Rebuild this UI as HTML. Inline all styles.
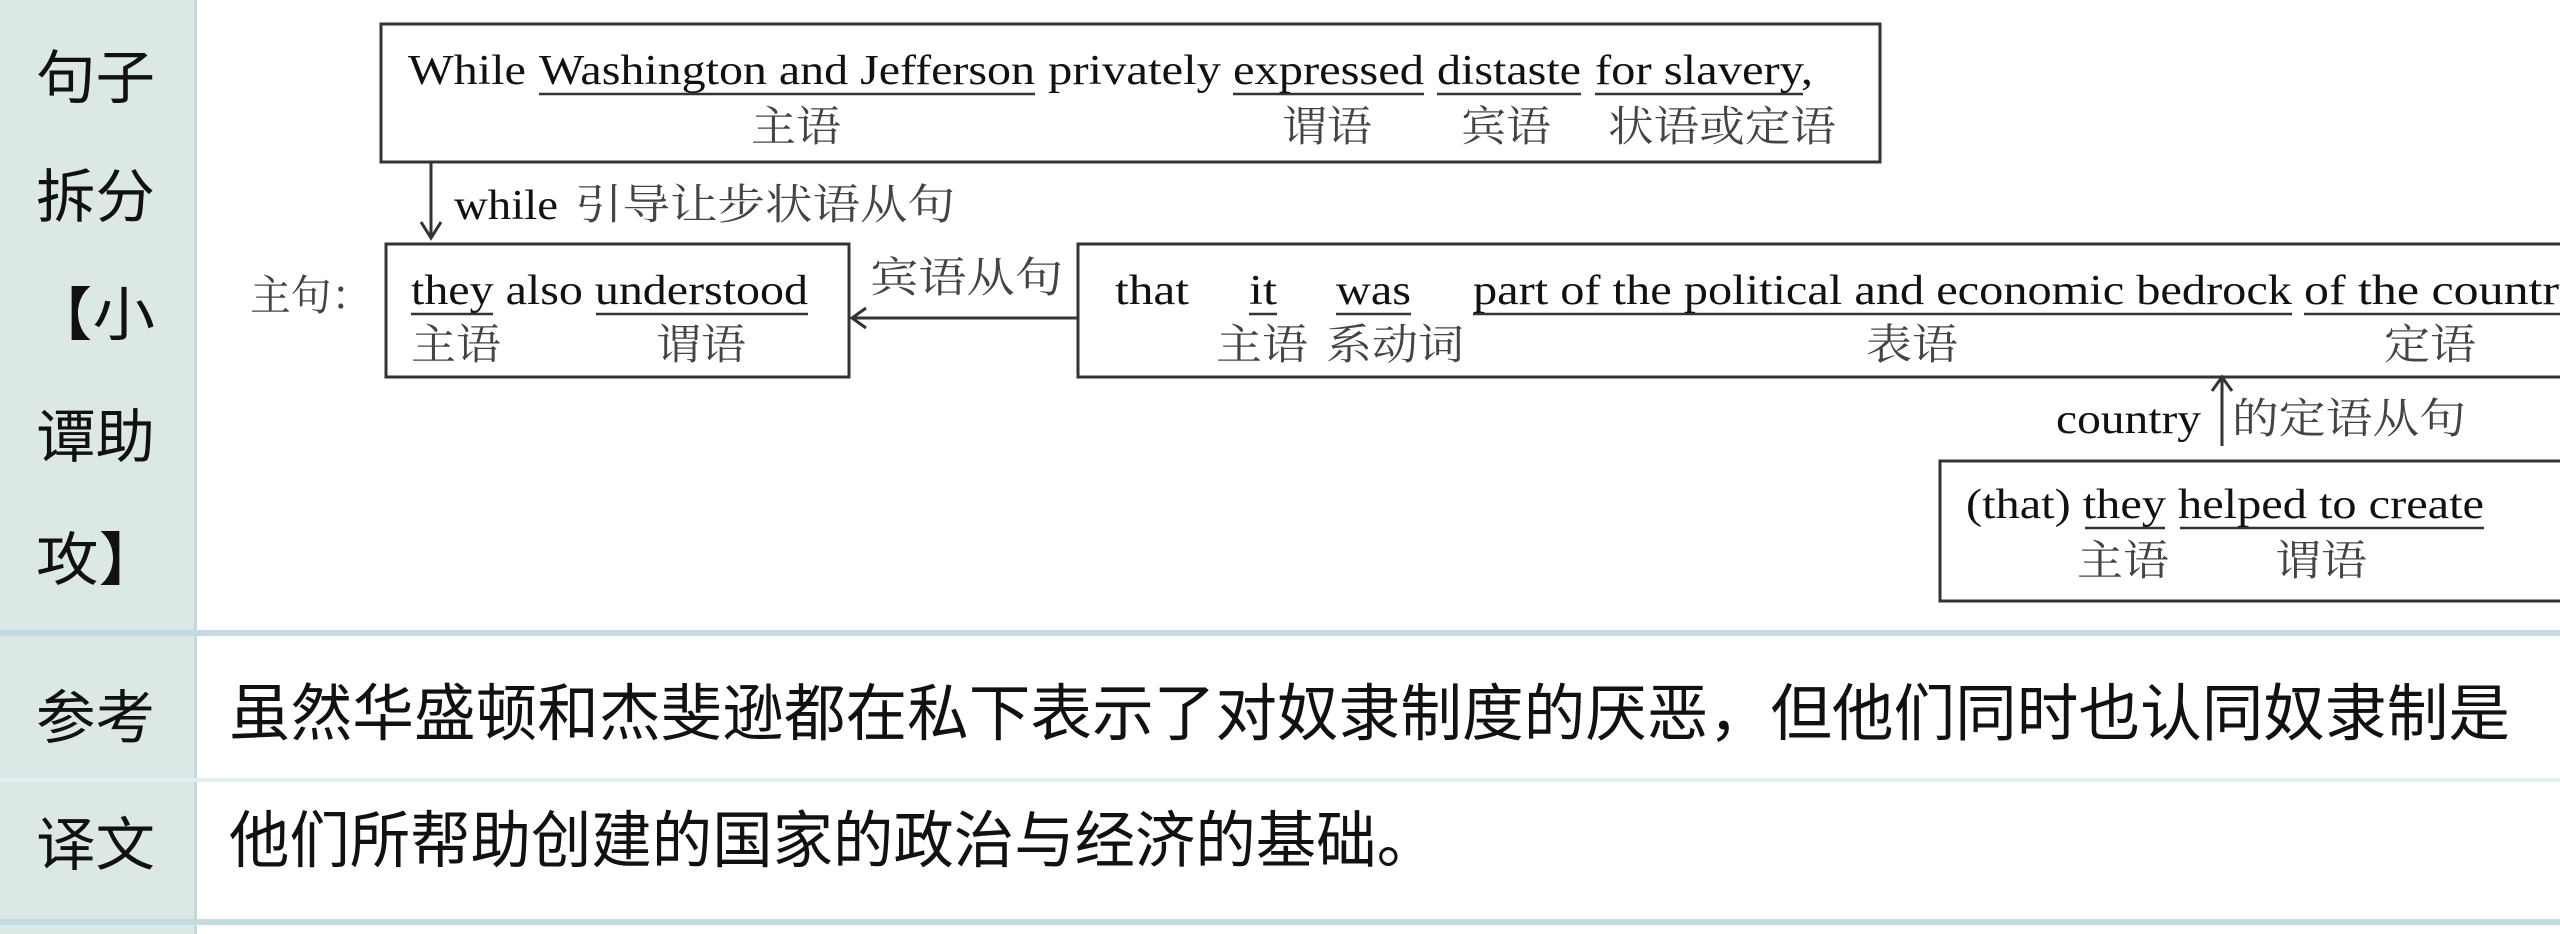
<!DOCTYPE html>
<html><head><meta charset="utf-8"><style>
html,body{margin:0;padding:0;background:#fff;width:2560px;height:934px;overflow:hidden}
svg{display:block}
.e{font-family:"Liberation Serif","Noto Serif CJK SC",serif;fill:#111}
.c{font-family:"Liberation Serif","Noto Serif CJK SC",serif;fill:#444}
.k{font-family:"Liberation Sans","Noto Sans CJK SC",sans-serif;fill:#111}
</style></head><body>
<svg width="2560" height="934" viewBox="0 0 2560 934" xmlns="http://www.w3.org/2000/svg">
<rect x="0" y="0" width="196" height="934" fill="#dbe8e5"/>
<rect x="194" y="0" width="3" height="934" fill="#c4d8df"/>
<rect x="0" y="630" width="2560" height="6" fill="#c5d9e0"/>
<rect x="0" y="778" width="2560" height="4" fill="#e4eef1"/>
<rect x="0" y="919" width="2560" height="6" fill="#c5d9e0"/>

<g class="k" font-size="58">
<text x="36" y="98" textLength="119" lengthAdjust="spacingAndGlyphs">句子</text>
<text x="36" y="217" textLength="119" lengthAdjust="spacingAndGlyphs">拆分</text>
<text x="30" y="335" textLength="125" lengthAdjust="spacingAndGlyphs">【小</text>
<text x="36" y="457" textLength="119" lengthAdjust="spacingAndGlyphs">谭助</text>
<text x="36" y="580" textLength="125" lengthAdjust="spacingAndGlyphs">攻】</text>
<text x="36" y="738" textLength="119" lengthAdjust="spacingAndGlyphs">参考</text>
<text x="36" y="865" textLength="119" lengthAdjust="spacingAndGlyphs">译文</text>
</g>
<g class="k" font-size="62">
<text x="229" y="735" textLength="2281" lengthAdjust="spacingAndGlyphs">虽然华盛顿和杰斐逊都在私下表示了对奴隶制度的厌恶，但他们同时也认同奴隶制是</text>
<text x="229" y="862" textLength="1208" lengthAdjust="spacingAndGlyphs">他们所帮助创建的国家的政治与经济的基础。</text>
</g>

<g fill="none" stroke="#333" stroke-width="3">
<rect x="381" y="24" width="1499" height="138"/>
<rect x="386" y="244" width="463" height="133"/>
<rect x="1078" y="244" width="1500" height="133"/>
<rect x="1940" y="461" width="640" height="140"/>
<path d="M431 162 V236 M421 222 L431 238 L441 222"/>
<path d="M1078 318 H853 M866 308 L852 318 L866 328"/>
<path d="M2222 377 V446 M2212 391 L2222 377 L2232 391"/>
</g>
<g stroke="#333" stroke-width="2.5">
<line x1="539" y1="94" x2="1035" y2="94"/>
<line x1="1233" y1="94" x2="1424" y2="94"/>
<line x1="1437" y1="94" x2="1581" y2="94"/>
<line x1="1595" y1="94" x2="1803" y2="94"/>
<line x1="411" y1="314" x2="493" y2="314"/>
<line x1="596" y1="314" x2="808" y2="314"/>
<line x1="1249" y1="314" x2="1277" y2="314"/>
<line x1="1336" y1="314" x2="1411" y2="314"/>
<line x1="1473" y1="314" x2="2292" y2="314"/>
<line x1="2304" y1="314" x2="2560" y2="314"/>
<line x1="2085" y1="528" x2="2165" y2="528"/>
<line x1="2180" y1="528" x2="2484" y2="528"/>
</g>

<g class="e" font-size="42">
<text x="408" y="84" textLength="118" lengthAdjust="spacingAndGlyphs">While</text>
<text x="539" y="84" textLength="496" lengthAdjust="spacingAndGlyphs">Washington and Jefferson</text>
<text x="1048" y="84" textLength="173" lengthAdjust="spacingAndGlyphs">privately</text>
<text x="1233" y="84" textLength="191" lengthAdjust="spacingAndGlyphs">expressed</text>
<text x="1437" y="84" textLength="144" lengthAdjust="spacingAndGlyphs">distaste</text>
<text x="1595" y="84" textLength="218" lengthAdjust="spacingAndGlyphs">for slavery,</text>
<text x="411" y="304" textLength="397" lengthAdjust="spacingAndGlyphs">they also understood</text>
<text x="1115" y="304" textLength="74" lengthAdjust="spacingAndGlyphs">that</text>
<text x="1249" y="304" textLength="28" lengthAdjust="spacingAndGlyphs">it</text>
<text x="1336" y="304" textLength="75" lengthAdjust="spacingAndGlyphs">was</text>
<text x="1473" y="304" textLength="819" lengthAdjust="spacingAndGlyphs">part of the political and economic bedrock</text>
<text x="2304" y="304" textLength="280" lengthAdjust="spacingAndGlyphs">of the country</text>
<text x="1966" y="518" textLength="518" lengthAdjust="spacingAndGlyphs">(that) they helped to create</text>
<text x="454" y="219" textLength="104" lengthAdjust="spacingAndGlyphs">while</text>
<text x="2056" y="433" textLength="145" lengthAdjust="spacingAndGlyphs">country</text>
</g>
<g class="c" font-size="42">
<text x="751" y="141" textLength="90" lengthAdjust="spacingAndGlyphs">主语</text>
<text x="1282" y="141" textLength="90" lengthAdjust="spacingAndGlyphs">谓语</text>
<text x="1461" y="141" textLength="90" lengthAdjust="spacingAndGlyphs">宾语</text>
<text x="1608" y="141" textLength="228" lengthAdjust="spacingAndGlyphs">状语或定语</text>
<text x="411" y="359" textLength="90" lengthAdjust="spacingAndGlyphs">主语</text>
<text x="656" y="359" textLength="90" lengthAdjust="spacingAndGlyphs">谓语</text>
<text x="1216" y="359" textLength="92" lengthAdjust="spacingAndGlyphs">主语</text>
<text x="1326" y="359" textLength="138" lengthAdjust="spacingAndGlyphs">系动词</text>
<text x="1866" y="359" textLength="92" lengthAdjust="spacingAndGlyphs">表语</text>
<text x="2384" y="359" textLength="92" lengthAdjust="spacingAndGlyphs">定语</text>
<text x="2077" y="575" textLength="92" lengthAdjust="spacingAndGlyphs">主语</text>
<text x="2275" y="575" textLength="92" lengthAdjust="spacingAndGlyphs">谓语</text>
<text x="250" y="310" textLength="122" lengthAdjust="spacingAndGlyphs">主句：</text>
<text x="870" y="292" textLength="193" lengthAdjust="spacingAndGlyphs">宾语从句</text>
<text x="575" y="219" textLength="380" lengthAdjust="spacingAndGlyphs">引导让步状语从句</text>
<text x="2232" y="433" textLength="234" lengthAdjust="spacingAndGlyphs">的定语从句</text>
</g>
</svg>
</body></html>
